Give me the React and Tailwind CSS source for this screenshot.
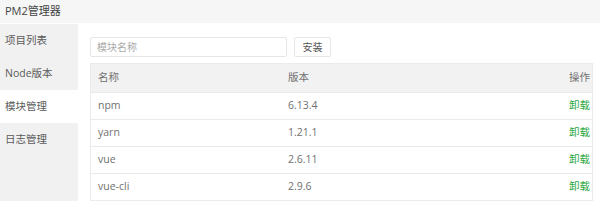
import React from "react";

const rows = [
  ["npm", "6.13.4"],
  ["yarn", "1.21.1"],
  ["vue", "2.6.11"],
  ["vue-cli", "2.9.6"],
];

const menu = ["项目列表", "Node版本", "模块管理", "日志管理"];

export default function App() {
  return (
    <div className="w-[600px] h-[201px] overflow-hidden bg-white flex flex-col font-['Open_Sans','Noto_Sans_CJK_SC',sans-serif]">
      <div className="h-[24px] shrink-0 bg-[#f6f6f6] border-b border-[#fdfdfd] flex items-center pl-[5px] text-[11px] text-[#444]">
        PM2管理器
      </div>
      <div className="flex flex-1 min-h-0">
        <div className="w-[78px] shrink-0 bg-[#f1f1f1] flex flex-col">
          {menu.map((m, i) => (
            <div
              key={m}
              className={`h-[33px] flex items-center pl-[5px] text-[10.5px] text-[#5a5a5a] ${i === 2 ? "bg-white" : ""}`}
            >
              {m}
            </div>
          ))}
        </div>
        <div className="flex-1 pl-[12px] pr-[7px] pt-[13px] flex flex-col">
          <div className="flex gap-[7px] h-[25px]">
            <div className="w-[197px] border border-[#e6e6e6] rounded-[2px] flex items-center pl-[6px] text-[10px] text-[#aaa]">
              模块名称
            </div>
            <div className="w-[37px] border border-[#e6e6e6] rounded-[2px] flex items-center justify-center text-[10px] text-[#555]">
              安装
            </div>
          </div>
          <div className="mt-[6px] border border-[#ebebeb] text-[10.5px] text-[#707070]">
            <div className="h-[28px] bg-[#f2f2f2] flex items-center">
              <div className="w-[190px] pl-[7px]">名称</div>
              <div className="flex-1 pl-[7px]">版本</div>
              <div className="pr-[2px]">操作</div>
            </div>
            {rows.map(([n, v]) => (
              <div key={n} className="h-[27px] border-t border-[#ebebeb] flex items-center">
                <div className="w-[190px] pl-[7px]">{n}</div>
                <div className="flex-1 pl-[7px]">{v}</div>
                <div className="pr-[2px] text-[#2aa83e]">卸载</div>
              </div>
            ))}
          </div>
        </div>
      </div>
    </div>
  );
}
